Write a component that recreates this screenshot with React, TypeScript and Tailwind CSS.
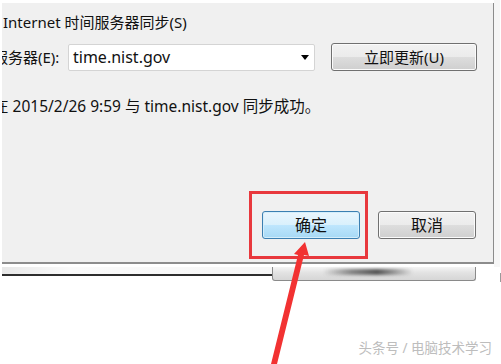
export default function App() {
  return (
    <div
      className="relative h-[364px] w-[501px] overflow-hidden bg-white text-[#111]"
      style={{ fontFamily: '"Noto Sans", "Noto Sans CJK SC", sans-serif' }}
    >
      {/* Dialog body */}
      <div className="flex">
        <div className="ml-[2px] mt-[3px] h-[261px] w-[492px] overflow-hidden border-b-2 border-r border-[#8c8c8c] bg-[#f0f0f0]">
          <div className="pl-[1px] pt-[9px] text-[15px] leading-5">Internet 时间服务器同步(S)</div>

          <div className="mt-[11px] flex items-center">
            <div className="-ml-[9px] w-[75px] text-[15px] leading-5">服务器(E):</div>
            <div className="flex h-[27px] w-[247px] items-center justify-between rounded-[2px] border border-[#d4d4d4] bg-white pl-[4px] pr-[5px]">
              <span className="text-[16px] leading-5">time.nist.gov</span>
              <span className="h-0 w-0 border-x-[4px] border-t-[5px] border-x-transparent border-t-black" />
            </div>
            <button className="ml-[16px] h-[28px] w-[146px] rounded-[3px] border border-[#707070] bg-[linear-gradient(#f2f2f2_0%,#ebebeb_50%,#dddddd_51%,#cfcfcf_100%)] text-[15px] leading-5 shadow-[inset_0_0_0_1px_#fbfbfb]">
              立即更新(U)
            </button>
          </div>

          <div className="-ml-[9px] mt-[25px] whitespace-nowrap text-[15.5px] leading-5">
            在 2015/2/26 9:59 与 time.nist.gov 同步成功。
          </div>

          <div className="mt-[95px] flex justify-end gap-[18px] pr-[17px]">
            <button className="h-[28px] w-[98px] rounded-[3px] border border-[#3c7fb1] bg-[linear-gradient(#eaf6fd_0%,#d9f0fc_50%,#bee6fd_51%,#a7d9f5_100%)] text-[16px] leading-5 shadow-[inset_0_0_0_1px_#d5eefb]">
              确定
            </button>
            <button className="h-[28px] w-[98px] rounded-[3px] border border-[#707070] bg-[linear-gradient(#f2f2f2_0%,#ebebeb_50%,#dddddd_51%,#cfcfcf_100%)] text-[16px] leading-5 shadow-[inset_0_0_0_1px_#fbfbfb]">
              取消
            </button>
          </div>
        </div>
        <div className="h-[267px] w-[6px] bg-[#f6f6f6]" />
      </div>

      {/* Strip of the window behind */}
      <div className="flex h-[15px] items-start">
        <div className="ml-[2px] h-[9px] w-[270px] border-b-2 border-[#2e2e2e] bg-[linear-gradient(90deg,#e8e8e8,#fafafa_25%,#f6f6f6)]" />
        <div className="h-[14px] w-[204px] rounded-b-[3px] border-x border-b border-[#8a8a8a] bg-[linear-gradient(#f4f4f4,#e2e2e2_45%,#d6d6d6)]">
          <div className="ml-[50px] mt-[2px] h-[6px] w-[90px] rounded-full bg-[linear-gradient(90deg,transparent,#8a8a8a_30%,#555_60%,#9a9a9a_80%,transparent)] blur-[1.5px]" />
        </div>
        <div className="flex-1" />
        <div className="mt-[6px] h-[9px] w-px bg-[#9a9a9a]" />
      </div>

      {/* Watermark */}
      <div className="mt-[56px] flex justify-end pr-[9px]">
        <span className="text-[13.5px] leading-5 text-[#bdbdbd]">头条号 / 电脑技术学习</span>
      </div>

      {/* Annotation box */}
      <div className="absolute left-[249px] top-[191px] h-[68px] w-[119px] border-[3px] border-[#e8383d]" />

      {/* Annotation arrow */}
      <svg className="absolute left-0 top-0" width="501" height="364" viewBox="0 0 501 364">
        <polygon
          points="305,242 309,256 304,255 277,364 271,364 298,255 294,254"
          fill="#f23232"
        />
      </svg>
    </div>
  )
}
